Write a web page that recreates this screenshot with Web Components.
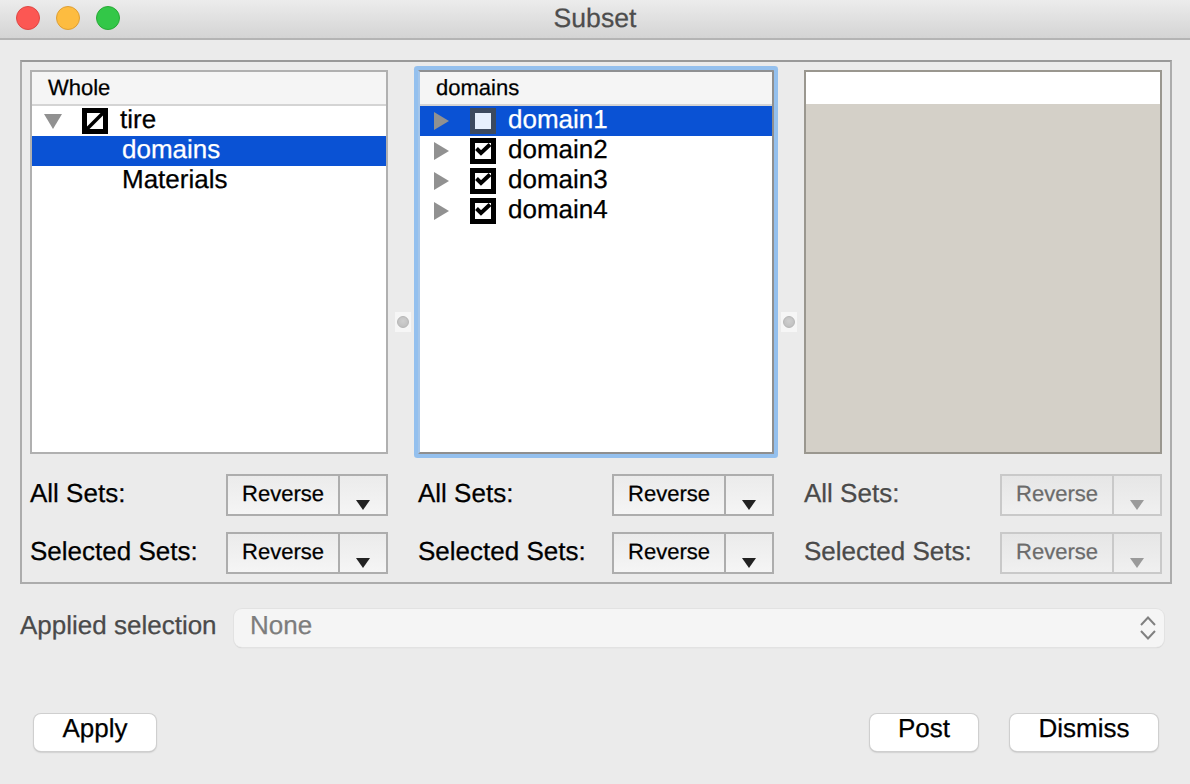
<!DOCTYPE html>
<html><head><meta charset="utf-8"><style>
html,body{margin:0;padding:0;height:100%;background:#ebebeb;overflow:hidden}
body{font:26px "Liberation Sans",Arial,sans-serif;color:#000;text-rendering:geometricPrecision;-webkit-text-stroke:.25px currentColor}
</style></head><body>
<x-window>
  <x-titlebar slot="bar">Subset</x-titlebar>
  <x-group>
    <x-column>
      <x-panel title="Whole">
        <x-row expander="down" check="mixed">tire</x-row>
        <x-row selected plain>domains</x-row>
        <x-row plain>Materials</x-row>
      </x-panel>
      <x-action label="All Sets:"></x-action>
      <x-action label="Selected Sets:"></x-action>
    </x-column>
    <x-grip></x-grip>
    <x-column narrow>
      <x-panel title="domains" focused>
        <x-row expander="right" check="off" selected>domain1</x-row>
        <x-row expander="right" check="on">domain2</x-row>
        <x-row expander="right" check="on">domain3</x-row>
        <x-row expander="right" check="on">domain4</x-row>
      </x-panel>
      <x-action label="All Sets:"></x-action>
      <x-action label="Selected Sets:"></x-action>
    </x-column>
    <x-grip></x-grip>
    <x-column>
      <x-panel disabled></x-panel>
      <x-action label="All Sets:" disabled></x-action>
      <x-action label="Selected Sets:" disabled></x-action>
    </x-column>
  </x-group>
  <x-applied label="Applied selection" value="None"></x-applied>
  <x-footer>
    <x-push w="122">Apply</x-push>
    <x-push w="108" style="margin-left:auto">Post</x-push>
    <x-push w="148" style="margin-left:32px">Dismiss</x-push>
  </x-footer>
</x-window>
<script>
function def(name, css, html){
  customElements.define(name, class extends HTMLElement{
    constructor(){super();this.attachShadow({mode:'open'});}
    connectedCallback(){
      const h = typeof html==='function'?html(this):html;
      this.shadowRoot.innerHTML='<style>'+css+'</style>'+h;
    }
  });
}
def('x-window',`:host{display:flex;flex-direction:column;width:1190px;height:784px;box-sizing:border-box;background:#ebebeb}
 .body{display:flex;flex-direction:column;flex:1;padding:20px 25px 0 20px}`,
 `<slot name="bar"></slot><div class="body"><slot></slot></div>`);
def('x-titlebar',`:host{display:flex;align-items:center;justify-content:center;position:relative;height:40px;box-sizing:border-box;
  background:linear-gradient(#ececec,#d4d4d4);border-bottom:2px solid #b4b4b4;color:#4d4d4d;font-size:26.6px}
 .l{position:absolute;left:16px;top:6px;display:flex;gap:16px}
 .l i{display:block;width:24px;height:24px;border-radius:50%;box-sizing:border-box}
 .r{background:#fc5753;border:1px solid #df4744}.y{background:#fdbc40;border:1px solid #de9f34}.g{background:#33c748;border:1px solid #27aa35}
 span{padding-bottom:2px}`,
 `<div class="l"><i class="r"></i><i class="y"></i><i class="g"></i></div><span><slot></slot></span>`);
def('x-group',`:host{display:flex;width:1152px;height:524px;box-sizing:border-box;border:2px solid #acacac;border-top-color:#999;padding:8px;flex:none}`,`<slot></slot>`);
def('x-column',`:host{display:flex;flex-direction:column;width:358px;flex:none}
 :host([narrow]){width:356px}`,`<slot></slot>`);
def('x-grip',`:host{display:flex;align-items:center;justify-content:center;width:30px;flex:none;box-sizing:border-box}
 b{display:flex;align-items:center;justify-content:center;width:16px;height:20px;background:#f6f6f6}
 i{display:block;width:12px;height:12px;border-radius:50%;background:radial-gradient(circle at 50% 40%,#cfcfcf,#bcbcbc);border:1px solid #b6b6b6;box-sizing:border-box}`,
 `<b><i></i></b>`);
def('x-panel',`:host{display:flex;flex-direction:column;height:384px;box-sizing:border-box;border:2px solid #b0b0b0;background:#fff;position:relative;flex:none}
 :host([focused]){border-color:#8f9092 #8f8f8f #8f8f8f #a5c6ea;box-shadow:0 0 0 4px #94c0ee;border-radius:1px}
 :host([disabled]){background:#d4d0c8;border-color:#9a978f}
 .h{height:34px;box-sizing:border-box;background:#f5f5f5;border-bottom:2px solid #d4d4d4;font-size:22px;line-height:31px;padding-left:16px;flex:none}
 :host([disabled]) .h{background:#fff;border-bottom:none;height:32px}
 .b{display:flex;flex-direction:column}`,
 h=>`<div class="h">${h.getAttribute('title')||''}</div><div class="b"><slot></slot></div>`);
const CHECK={
 on:`<svg width="26" height="26" viewBox="0 0 26 26"><rect x="2.5" y="2.5" width="21" height="21" fill="#fff" stroke="#000" stroke-width="5"/><path d="M6.5 10.5L11 15L20 6.5" fill="none" stroke="#000" stroke-width="4"/></svg>`,
 mixed:`<svg width="26" height="26" viewBox="0 0 26 26"><rect x="2.5" y="2.5" width="21" height="21" fill="#fff" stroke="#000" stroke-width="5"/><path d="M5 21L21 5" fill="none" stroke="#000" stroke-width="3.6"/></svg>`,
 off:`<svg width="26" height="26" viewBox="0 0 26 26"><rect x="2.5" y="2.5" width="21" height="21" fill="#e6f0fd" stroke="#3c4a5f" stroke-width="5"/></svg>`};
const ARR={
 down:`<svg width="18" height="15" viewBox="0 0 18 15"><path d="M0 0H18L9 15Z" fill="#919191"/></svg>`,
 right:`<svg width="15" height="18" viewBox="0 0 15 18"><path d="M0 0V18L15 9Z" fill="#919191"/></svg>`};
def('x-row',`:host{display:flex;align-items:center;height:30px;font-size:26px;flex:none}
 :host([selected]){background:#0a52d4;color:#fff}
 .e{width:42px;margin-right:8px;display:flex;justify-content:center;align-items:center;flex:none}
 .e svg{display:block}
 .c{width:26px;height:26px;margin-right:12px;flex:none}.c svg{display:block}
 .t{line-height:26px;padding-bottom:4px}
 :host([plain]) .t{padding-left:90px}`,
 h=>h.hasAttribute('plain')?`<span class="t"><slot></slot></span>`:
 `<span class="e">${ARR[h.getAttribute('expander')]}</span><span class="c">${CHECK[h.getAttribute('check')]}</span><span class="t"><slot></slot></span>`);
def('x-action',`:host{display:flex;align-items:center;justify-content:space-between;height:42px;margin-top:20px;flex:none}
 :host(:last-child){margin-top:16px}
 :host([disabled]){color:#4a4a4a}
 .lb{padding-bottom:4px}
 .b{display:flex;width:162px;height:42px;box-sizing:border-box;border:2px solid #adadad;background:linear-gradient(#ebebeb,#f5f5f5);font-size:22px}
 :host([disabled]) .b{border-color:#c9c9c9;color:#6b6b6b;background:linear-gradient(#e6e6e6,#f0f0f0)}
 .m{width:110px;box-sizing:border-box;text-align:center;line-height:36px;flex:none}
 .a{flex:1;border-left:2px solid #adadad;display:flex;justify-content:center;align-items:flex-end;padding-bottom:4px}
 :host([disabled]) .a{border-left-color:#c9c9c9}
 .a svg{display:block}`,
 h=>`<span class="lb">${h.getAttribute('label')}</span><div class="b"><span class="m">Reverse</span><span class="a"><svg width="14" height="10" viewBox="0 0 14 10"><path d="M0 0H14L7 10Z" fill="${h.hasAttribute('disabled')?'#9a9a9a':'#222'}"/></svg></span></div>`);
def('x-applied',`:host{display:flex;align-items:center;height:38px;margin-top:25px;color:#4a4a4a;flex:none;width:1144px}
 .l{width:214px;flex:none;padding-bottom:6px}
 .c{flex:1;height:38px;box-sizing:border-box;border-radius:8px;background:#f5f5f5;box-shadow:0 0 0 1px #e2e2e2,0 1px 1px #c4c4c4;display:flex;align-items:center;justify-content:space-between;padding:0 8px 0 16px;color:#7d7d7d}
 .c span{padding-bottom:6px}
 svg{display:block}`,
 h=>`<span class="l">${h.getAttribute('label')}</span><div class="c"><span>${h.getAttribute('value')}</span><svg width="16" height="24" viewBox="0 0 16 24"><path d="M1 9L8 1.5L15 9M1 15L8 22.5L15 15" fill="none" stroke="#808080" stroke-width="2"/></svg></div>`);
def('x-footer',`:host{display:flex;align-items:flex-start;padding:67px 7px 0 14px;width:1145px;box-sizing:border-box;flex:none}`,`<slot></slot>`);
def('x-push',`:host{display:block;height:37px;box-sizing:border-box;background:#fff;border-radius:7px;text-align:center;line-height:28px;font-size:26px;flex:none;
  box-shadow:0 0 0 1px #cfcfcf,0 1px 2px 0 #9a9a9a}`,
 h=>{h.style.width=h.getAttribute('w')+'px';return `<slot></slot>`;});
</script>
</body></html>
